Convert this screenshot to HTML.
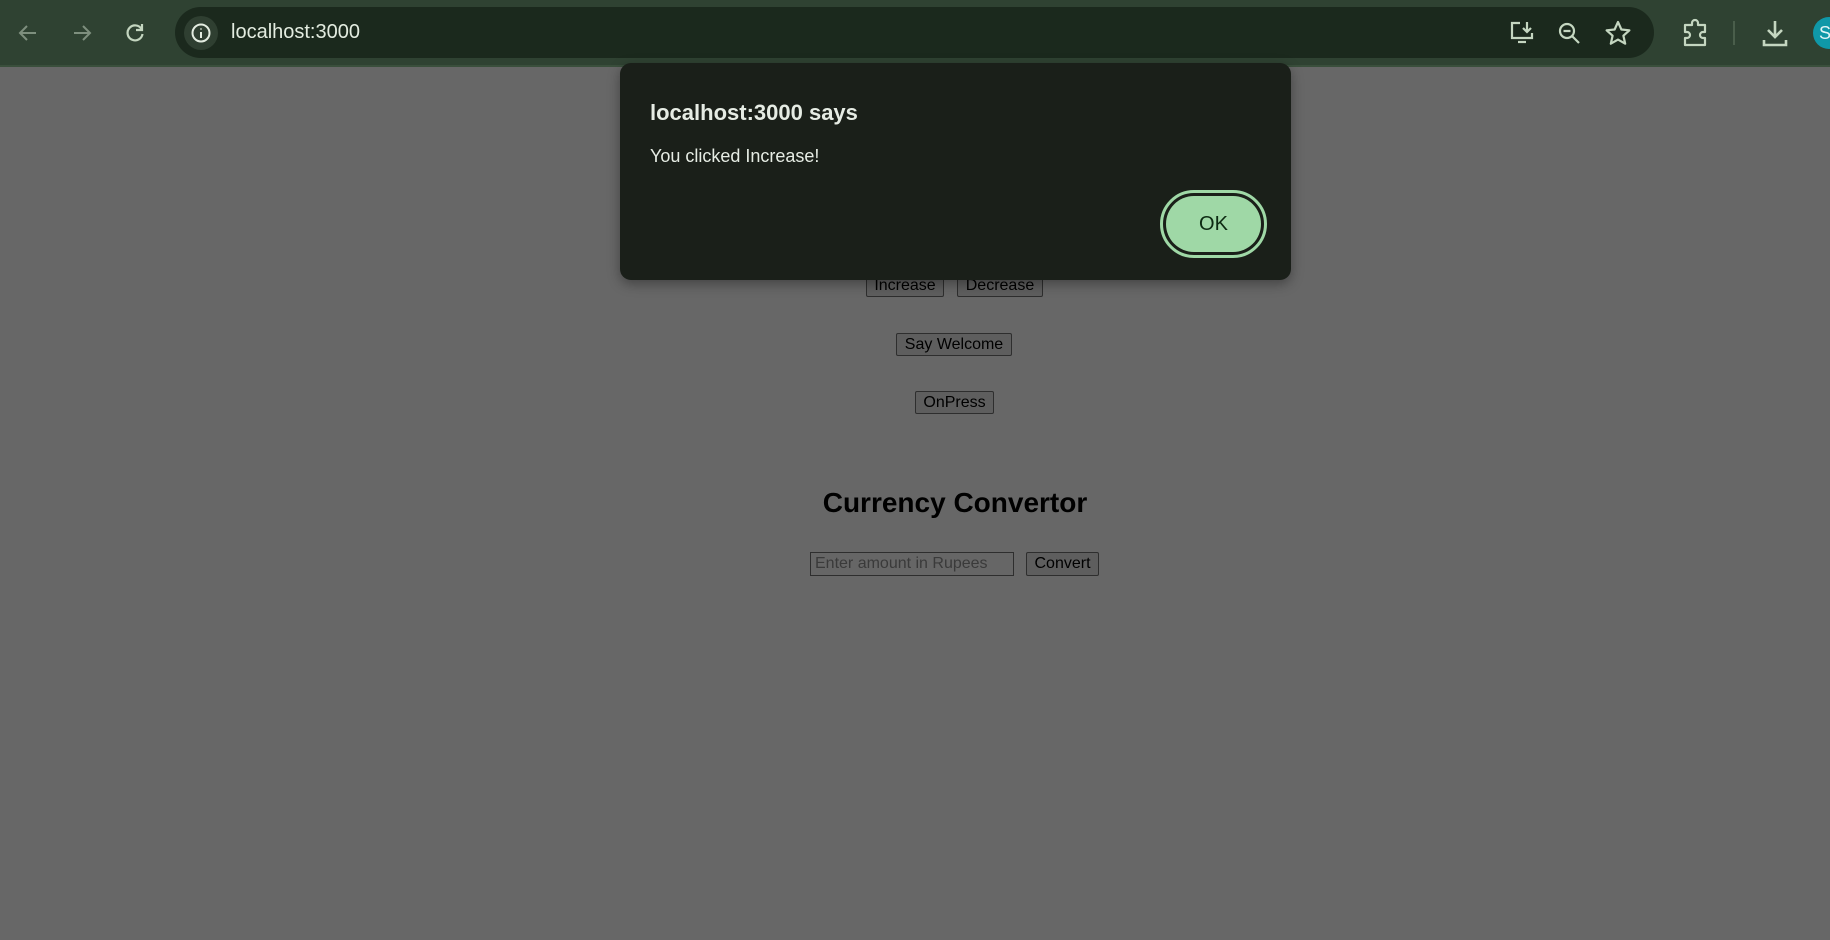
<!DOCTYPE html>
<html><head><style>
*{margin:0;padding:0;box-sizing:border-box}
body{width:1830px;height:940px;background:#676767;position:relative;overflow:hidden;font-family:"Liberation Sans",sans-serif}
.tb{position:absolute;left:0;top:0;width:1830px;height:67px;background:#2f4232;border-bottom:2px solid #3a4f3c}
.omni{position:absolute;left:175px;top:7px;width:1479px;height:51px;background:#1b291d;border-radius:26px}
.ic{position:absolute}
.url{position:absolute;left:231px;top:21px;color:#e3ece0;font-size:20px}
.btn{position:absolute;background:#5e5e5e;border:1px solid #2e2e2e;border-radius:2px;font-size:16px;color:#000;text-align:center;line-height:21px}
.dlg{position:absolute;left:620px;top:63px;width:671px;height:217px;background:#1a1f19;border-radius:11px;box-shadow:0 4px 12px rgba(0,0,0,.35)}
</style></head><body>
<div class="tb"></div>
<svg class="ic" style="left:14px;top:21px" width="28" height="24" viewBox="0 0 28 24" fill="none" stroke="#7e8f7e" stroke-width="2"><path d="M22 12H6M13 5l-7 7 7 7"/></svg>
<svg class="ic" style="left:68px;top:21px" width="28" height="24" viewBox="0 0 28 24" fill="none" stroke="#7e8f7e" stroke-width="2"><path d="M6 12h16M15 5l7 7-7 7"/></svg>
<svg class="ic" style="left:123px;top:21px" width="24" height="24" viewBox="0 0 24 24" fill="none" stroke="#c4d6c0" stroke-width="2.2"><path d="M18.5 8A7.5 7.5 0 1 0 19.5 13"/><path d="M19 3v6h-6" /></svg>
<div class="omni"></div>
<div style="position:absolute;left:184px;top:16px;width:34px;height:34px;border-radius:50%;background:#2f3f31"></div>
<svg class="ic" style="left:190px;top:22px" width="22" height="22" viewBox="0 0 22 22" fill="none" stroke="#e3ece0" stroke-width="2"><circle cx="11" cy="11" r="8.5"/><path d="M11 10v6M11 6.5v1"/></svg>
<div class="url">localhost:3000</div>
<svg class="ic" style="left:1508px;top:20px" width="28" height="26" viewBox="0 0 28 26" fill="none" stroke="#c4d6c0" stroke-width="2.2"><path d="M12 3H4v15h20v-5"/><path d="M10 22h8"/><path d="M19 2v10M15 8l4 4 4-4"/></svg>
<svg class="ic" style="left:1557px;top:21px" width="26" height="26" viewBox="0 0 26 26" fill="none" stroke="#c4d6c0" stroke-width="2.2"><circle cx="10" cy="10" r="7"/><path d="M6.5 10h7M15 15l7 7"/></svg>
<svg class="ic" style="left:1604px;top:20px" width="28" height="26" viewBox="0 0 28 26" fill="none" stroke="#c4d6c0" stroke-width="2.2" stroke-linejoin="round"><path d="M14 2l3.4 7.5 8 .8-6 5.4 1.8 8L14 19.6 6.8 23.7l1.8-8-6-5.4 8-.8z"/></svg>
<svg class="ic" style="left:1681px;top:18px" width="30" height="30" viewBox="0 0 30 30" fill="none" stroke="#c4d6c0" stroke-width="2.2" stroke-linejoin="round"><path d="M4 7h7V5a3 3 0 0 1 6 0v2h7v7h-2a3 3 0 0 0 0 6h2v7H4v-7h2a3 3 0 0 0 0-6H4z"/></svg>
<div style="position:absolute;left:1733px;top:21px;width:2px;height:24px;background:#4a5e4b"></div>
<svg class="ic" style="left:1761px;top:18px" width="28" height="30" viewBox="0 0 28 30" fill="none" stroke="#c4d6c0" stroke-width="2.6"><path d="M14 3v16M7 12l7 7 7-7M3 22v5h22v-5"/></svg>
<div style="position:absolute;left:1813px;top:17px;width:32px;height:32px;border-radius:50%;background:#0f98a8;color:#e0f4f6;font-size:18px;line-height:32px;padding-left:6px">S</div>

<div class="btn" style="left:866px;top:274px;width:78px;height:23px">Increase</div>
<div class="btn" style="left:957px;top:274px;width:86px;height:23px">Decrease</div>
<div class="btn" style="left:896px;top:333px;width:116px;height:23px">Say Welcome</div>
<div class="btn" style="left:915px;top:391px;width:79px;height:23px">OnPress</div>
<div style="position:absolute;left:755px;top:487px;width:400px;text-align:center;font-size:28px;font-weight:bold;color:#000">Currency Convertor</div>
<div style="position:absolute;left:810px;top:552px;width:204px;height:24px;border:1px solid #2e2e2e;background:#666;color:#3a3a3a;font-size:16px;line-height:22px;padding-left:4px">Enter amount in Rupees</div>
<div class="btn" style="left:1026px;top:552px;width:73px;height:24px">Convert</div>

<div class="dlg">
<div style="position:absolute;left:30px;top:37px;color:#e6ece4;font-size:22px;font-weight:bold">localhost:3000 says</div>
<div style="position:absolute;left:30px;top:83px;color:#e6ece4;font-size:18px">You clicked Increase!</div>
<div style="position:absolute;left:540px;top:127px;width:107px;height:68px;border-radius:34px;border:3px solid #9fd8a6;background:#1a1f19;padding:3px">
<div style="width:95px;height:56px;border-radius:28px;background:#9fd8a6;color:#0d2a12;font-size:20px;text-align:center;line-height:56px">OK</div>
</div>
</div>
</body></html>
